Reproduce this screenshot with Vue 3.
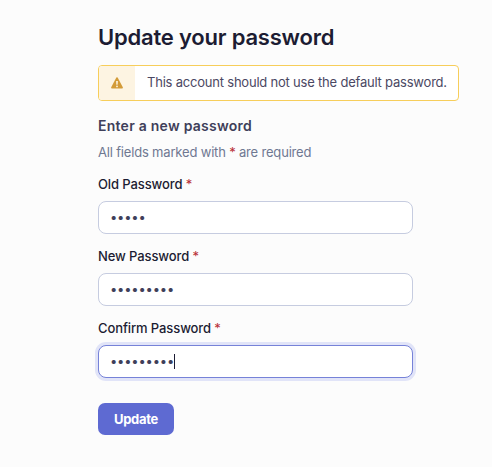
<script setup>
const fields = [
  { label: 'Old Password', value: '•'.repeat(5), focused: false },
  { label: 'New Password', value: '•'.repeat(9), focused: false },
  { label: 'Confirm Password', value: '•'.repeat(9), focused: true },
]
</script>

<template>
  <main class="page">
    <h1 class="title">Update your password</h1>
    <div class="alert">
      <div class="alert-icon">
        <svg width="12" height="12" viewBox="0 0 12 12">
          <path d="M5.35.6Q6 -.3 6.65.6L11.8 10.2Q12.1 11.4 11.1 11.4H.9Q-.1 11.4.2 10.2Z" fill="#d39b38" />
          <path d="M5.1 4H6.9L6.6 7.8H5.4Z" fill="#fdf4e2" />
          <circle cx="6" cy="9.4" r=".9" fill="#fdf4e2" />
        </svg>
      </div>
      <p class="alert-text">This account should not use the default password.</p>
    </div>
    <h2 class="subtitle">Enter a new password</h2>
    <p class="hint">All fields marked with <b class="star">*</b> are required</p>
    <form class="form">
      <div v-for="f in fields" :key="f.label" class="field">
        <label class="label">{{ f.label }} <b class="star">*</b></label>
        <div class="input" :class="{ focused: f.focused }">
          <span class="dots">{{ f.value }}</span><i v-if="f.focused" class="caret"></i>
        </div>
      </div>
      <button type="button" class="button">Update</button>
    </form>
  </main>
</template>

<style>
body {
  background: #fcfcfc;
}
</style>

<style scoped>
.page {
  box-sizing: border-box;
  height: 467px;
  padding: 22px 0 0 98px;
  font-family: Inter, "Liberation Sans", sans-serif;
  font-size: 13px;
  color: #3f3f5a;
}
h1, h2, p {
  margin: 0;
}
.title {
  height: 43px;
  line-height: 30px;
  font-size: 22px;
  font-weight: 600;
  letter-spacing: -0.2px;
  color: #1c1c33;
}
.alert {
  box-sizing: border-box;
  display: flex;
  width: 361px;
  height: 36px;
  border: 1px solid #f7ce5b;
  border-radius: 4px;
  background: #fff;
  overflow: hidden;
}
.alert-icon {
  display: flex;
  align-items: center;
  justify-content: center;
  width: 36px;
  background: #fdf4e2;
}
.alert-text {
  padding-left: 12px;
  line-height: 32px;
  letter-spacing: -0.21px;
  white-space: nowrap;
  color: #4b4863;
}
.subtitle {
  margin-top: 15px;
  height: 26px;
  line-height: 20px;
  font-size: 14px;
  font-weight: 600;
  letter-spacing: 0.25px;
  color: #3f3f5a;
}
.hint {
  height: 33px;
  line-height: 20px;
  letter-spacing: -0.18px;
  color: #6f7892;
}
.star {
  font-weight: 400;
  color: #b82d35;
}
.field {
  height: 72px;
}
.label {
  display: block;
  height: 26px;
  line-height: 18px;
  font-weight: 500;
  letter-spacing: -0.1px;
  color: #1c1c33;
}
.input {
  box-sizing: border-box;
  display: flex;
  align-items: center;
  width: 315px;
  height: 33px;
  padding-left: 12px;
  border: 1px solid #c6cce0;
  border-radius: 8px;
  background: #fff;
}
.focused {
  border-color: #7682d8;
  box-shadow: 0 0 0 3px #e1e4f8;
}
.dots {
  margin: -1px 0 0 -1px;
  letter-spacing: -0.2px;
  line-height: 20px;
}
.caret {
  width: 1px;
  height: 15px;
  background: #1c1c33;
}
.button {
  display: block;
  width: 76px;
  height: 32px;
  margin: 12px 0 0;
  padding: 0;
  border: 0;
  border-radius: 7px;
  background: #5e6ad2;
  color: #fff;
  font: 700 13px/32px Inter, "Liberation Sans", sans-serif;
  letter-spacing: -0.3px;
}
</style>
